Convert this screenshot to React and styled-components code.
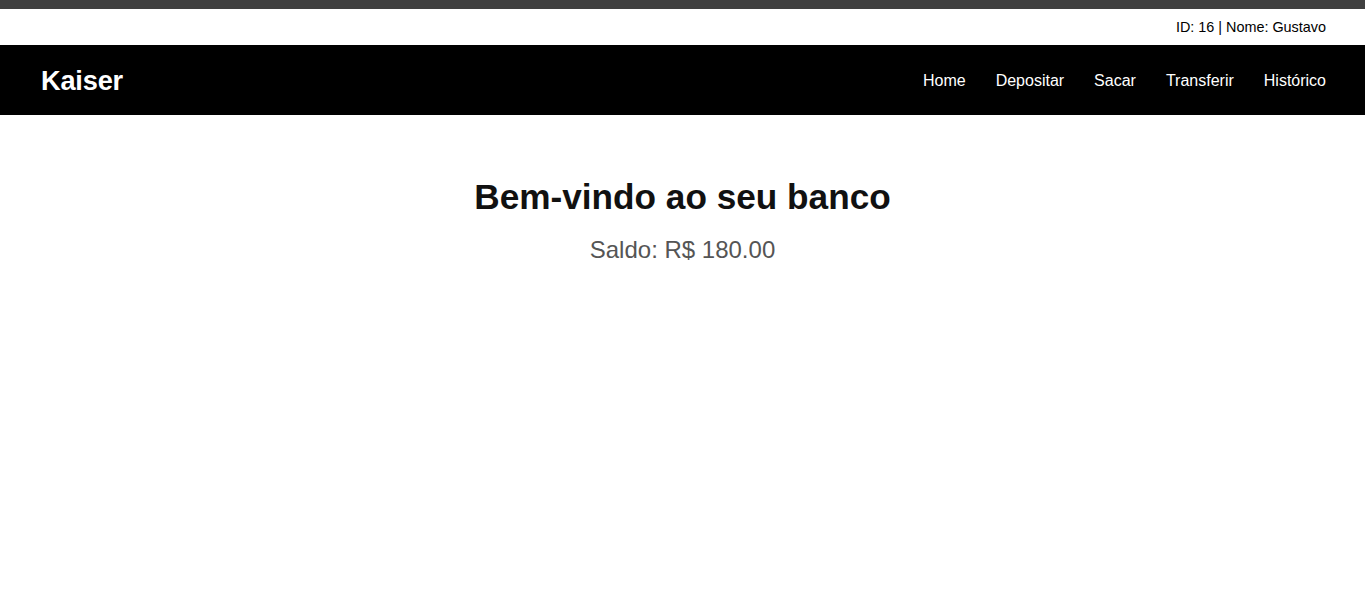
import React from 'react'
import styled, { createGlobalStyle } from 'styled-components'

const GlobalStyle = createGlobalStyle`
  body {
    margin: 0;
    font-family: 'Liberation Sans', Arial, sans-serif;
    background: #fff;
  }
`

const App = () => {
  return (
    <>
      <GlobalStyle />
      <TopStrip />
      <UserBar>ID: 16 | Nome: Gustavo</UserBar>
      <NavBar>
        <Logo>Kaiser</Logo>
        <NavLinks>
          <NavLink href="#">Home</NavLink>
          <NavLink href="#">Depositar</NavLink>
          <NavLink href="#">Sacar</NavLink>
          <NavLink href="#">Transferir</NavLink>
          <NavLink href="#">Histórico</NavLink>
        </NavLinks>
      </NavBar>
      <Main>
        <Title>Bem-vindo ao seu banco</Title>
        <Balance>Saldo: R$ 180.00</Balance>
      </Main>
    </>
  )
}

export default App

const TopStrip = styled.div`
  height: 9px;
  background: #404040;
`

const UserBar = styled.div`
  height: 36px;
  display: flex;
  align-items: center;
  justify-content: flex-end;
  padding: 0 39px;
  font-size: 14.4px;
  color: #000;
`

const NavBar = styled.nav`
  height: 70px;
  background: #000;
  display: flex;
  align-items: center;
  justify-content: space-between;
  padding: 1px 39px 0 41px;
  box-sizing: border-box;
`

const Logo = styled.div`
  color: #fff;
  font-size: 27.2px;
  font-weight: bold;
  letter-spacing: -0.2px;
`

const NavLinks = styled.div`
  display: flex;
  gap: 30px;
`

const NavLink = styled.a`
  color: #fff;
  text-decoration: none;
  font-size: 16px;
`

const Main = styled.main`
  display: flex;
  flex-direction: column;
  align-items: center;
  padding-top: 62px;
`

const Title = styled.h1`
  margin: 0;
  font-size: 35.2px;
  font-weight: bold;
  color: #111;
`

const Balance = styled.p`
  margin: 19px 0 0;
  font-size: 24px;
  color: #555;
`
